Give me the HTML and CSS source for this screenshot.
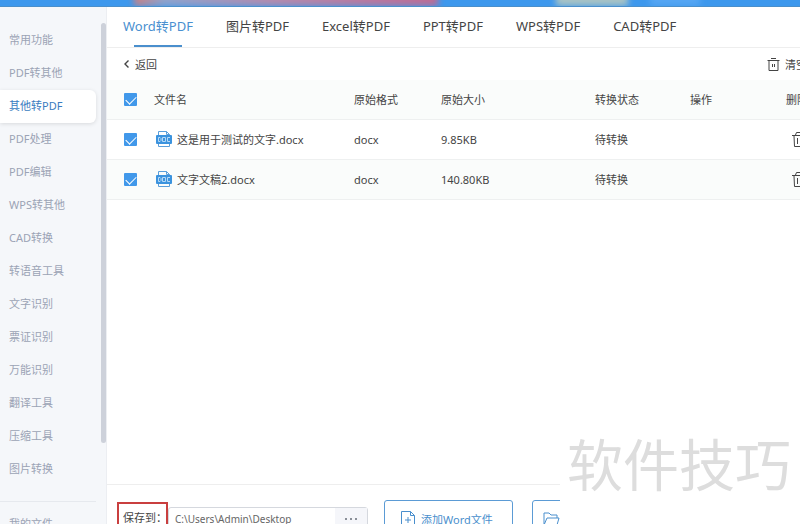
FILE: index.html
```html
<!DOCTYPE html>
<html lang="zh-CN">
<head>
    <meta charset="UTF-8">
    <meta name="viewport" content="width=device-width, initial-scale=1.0">
    <title>Word转PDF</title>
    <link rel="stylesheet" href="styles.css">
</head>
<body>
    <svg class="symbols" aria-hidden="true">
        <symbol id="icon-doc" viewBox="0 0 18 18">
            <path d="M3.500 7V1.500h8l3 3V7M3.500 13v3.500h11V13M11.500 1.500v3h3" fill="none" stroke="#5a9fdb"/>
            <rect x="1" y="5" width="16" height="9" rx="1" fill="#3b93de"/>
            <path d="M3.500 7.500v4h1.500l1-1v-2l-1-1zM7.500 7.500h3v4h-3zM15 7.500h-2.500v4H15" fill="none" stroke="#b5d8f6"/>
        </symbol>
        <symbol id="icon-clear" viewBox="0 0 13 13">
            <path d="M.5 2.500h12M4 .5h5M2 3v9.500h9V3M5.500 6v3M7.500 6v3" fill="none" stroke="currentColor"/>
        </symbol>
        <symbol id="icon-trash" viewBox="0 0 14 17">
            <path d="M0 4.500h14M3.500 4l1-2.500h5l1 2.500M2 5l.5 10.500h9L12 5M5.500 7v6M8.500 7v6" fill="none" stroke="currentColor"/>
        </symbol>
    </svg>

    <header class="titlebar">
        <span class="blur blur-red"></span>
        <span class="blur blur-tan"></span>
        <span class="blur blur-light"></span>
    </header>

    <div class="app">
        <aside class="sidebar">
            <nav class="menu">
                <a href="#">常用功能</a>
                <a href="#">PDF转其他</a>
                <a href="#" class="active">其他转PDF</a>
                <a href="#">PDF处理</a>
                <a href="#">PDF编辑</a>
                <a href="#">WPS转其他</a>
                <a href="#">CAD转换</a>
                <a href="#">转语音工具</a>
                <a href="#">文字识别</a>
                <a href="#">票证识别</a>
                <a href="#">万能识别</a>
                <a href="#">翻译工具</a>
                <a href="#">压缩工具</a>
                <a href="#">图片转换</a>
                <a href="#" class="my-files">我的文件</a>
            </nav>
            <div class="scroll-thumb"></div>
        </aside>

        <main class="main">
            <nav class="tabs">
                <a href="#" class="active">Word转PDF</a>
                <a href="#">图片转PDF</a>
                <a href="#">Excel转PDF</a>
                <a href="#">PPT转PDF</a>
                <a href="#">WPS转PDF</a>
                <a href="#">CAD转PDF</a>
            </nav>

            <div class="toolbar">
                <button type="button" class="back">
                    <svg width="7" height="8" viewBox="0 0 7 8"><path d="M5.500 .5L2 4l3.500 3.500" fill="none" stroke="currentColor" stroke-width="1.4"/></svg>
                    返回
                </button>
                <button type="button" class="clear">
                    <svg width="13" height="13"><use href="#icon-clear"/></svg>
                    清空
                </button>
            </div>

            <table class="files">
                <thead>
                    <tr>
                        <th class="col-check"><input type="checkbox" aria-label="全选" checked></th>
                        <th class="col-name">文件名</th>
                        <th class="col-format">原始格式</th>
                        <th class="col-size">原始大小</th>
                        <th class="col-status">转换状态</th>
                        <th class="col-action">操作</th>
                        <th class="col-delete">删除</th>
                    </tr>
                </thead>
                <tbody>
                    <tr>
                        <td><input type="checkbox" id="file1" checked></td>
                        <td><label class="file" for="file1"><svg width="18" height="18"><use href="#icon-doc"/></svg>这是用于测试的文字.docx</label></td>
                        <td>docx</td>
                        <td>9.85KB</td>
                        <td>待转换</td>
                        <td></td>
                        <td><button type="button" class="delete" aria-label="删除"><svg width="14" height="17"><use href="#icon-trash"/></svg></button></td>
                    </tr>
                    <tr>
                        <td><input type="checkbox" id="file2" checked></td>
                        <td><label class="file" for="file2"><svg width="18" height="18"><use href="#icon-doc"/></svg>文字文稿2.docx</label></td>
                        <td>docx</td>
                        <td>140.80KB</td>
                        <td>待转换</td>
                        <td></td>
                        <td><button type="button" class="delete" aria-label="删除"><svg width="14" height="17"><use href="#icon-trash"/></svg></button></td>
                    </tr>
                </tbody>
            </table>

            <footer class="bottom">
                <label class="save-label" for="savePath">保存到：</label>
                <div class="path">
                    <input type="text" id="savePath" value="C:\Users\Admin\Desktop">
                    <button type="button" class="browse" aria-label="浏览">
                        <svg width="12" height="2" viewBox="0 0 12 2"><path d="M0 0h2v2H0zM5 0h2v2H5zM10 0h2v2h-2z" fill="#8a8f98"/></svg>
                    </button>
                </div>
                <button type="button" class="add">
                    <svg width="14" height="16" viewBox="0 0 14 16"><path d="M.5 .5h9l4 4v11H.5zM9.500 .5v4h4M7 6v6M4 9h6" fill="none" stroke="currentColor"/></svg>
                    添加Word文件
                </button>
                <button type="button" class="add">
                    <svg width="17" height="14" viewBox="0 0 17 14"><path d="M1 13V1h5l2 2h6v3M1 13l3-7h12l-2 7z" fill="none" stroke="currentColor"/></svg>
                    添加文件夹
                </button>
            </footer>
        </main>
    </div>

    <div class="watermark">软件技巧</div>
</body>
</html>
```

FILE: styles.css
```css
* {
    box-sizing: border-box;
}
body {
    margin: 0;
    height: 100vh;
    overflow: hidden;
    display: flex;
    flex-direction: column;
    font-family: "Noto Sans", "Noto Sans CJK SC", sans-serif;
    font-size: 11px;
    color: #444;
    background-color: #fff;
}
a {
    color: inherit;
    text-decoration: none;
}
button {
    padding: 0;
    border: none;
    background: none;
    font: inherit;
    color: inherit;
    cursor: pointer;
}
svg {
    flex: none;
}
.symbols {
    position: absolute;
    width: 0;
    height: 0;
}

/* title bar */
.titlebar {
    position: relative;
    flex: none;
    height: 7px;
    overflow: hidden;
    background-color: #3d98ed;
    border-bottom: 1px solid #4a8fcb;
}
.blur {
    position: absolute;
    top: -8px;
    height: 14px;
    filter: blur(3px);
}
.blur-red {
    left: 134px;
    width: 304px;
    background: linear-gradient(to right, #cc7f80, #8fa3cc 10%, #b58bac 45%, #c06a92);
}
.blur-tan {
    left: 556px;
    width: 72px;
    background-color: #a9c3c4;
}
.blur-light {
    left: 650px;
    width: 50px;
    background-color: #55a6f3;
}

.app {
    flex: 1;
    min-height: 0;
    display: flex;
}

/* sidebar */
.sidebar {
    flex: none;
    width: 107px;
    display: flex;
    overflow: hidden;
    background-color: #f5f7fa;
    border-right: 1px solid #eceef2;
}
.menu {
    flex: 1;
    padding: 17px 5px 0 0;
    color: #9ba3b5;
}
.menu a {
    display: block;
    height: 33px;
    padding-left: 9px;
    line-height: 32px;
    white-space: nowrap;
}
.menu a.active {
    color: #3a7cc0;
    background-color: #fff;
    border-radius: 0 6px 6px 0;
    box-shadow: 0 1px 4px rgba(0, 0, 0, 0.12);
}
.menu a.my-files {
    margin-top: 15px;
    height: 50px;
    line-height: 44px;
    border-top: 1px solid #e6e9ee;
}
.scroll-thumb {
    width: 5px;
    height: 420px;
    margin-top: 16px;
    border-radius: 3px;
    background-color: #cdd1da;
}

/* main */
.main {
    flex: 1;
    min-width: 0;
    display: flex;
    flex-direction: column;
    overflow: hidden;
}
.tabs {
    flex: none;
    display: flex;
    gap: 33px;
    height: 41px;
    padding-left: 16px;
    border-bottom: 1px solid #eee;
    font-size: 13px;
    line-height: 38px;
    white-space: nowrap;
}
.tabs a.active {
    display: flex;
    flex-direction: column;
    align-items: center;
    color: #4a90d0;
}
.tabs a.active::after {
    content: "";
    width: 48px;
    height: 2px;
    background-color: #4a8fcd;
}
.toolbar {
    flex: none;
    display: flex;
    justify-content: space-between;
    min-width: 716px;
    height: 32px;
    padding: 0 16px;
}
.toolbar button {
    display: flex;
    align-items: center;
    gap: 5px;
}

.files {
    flex: none;
    width: 100%;
    min-width: 740px;
    table-layout: fixed;
    border-collapse: separate;
    border-spacing: 0;
}
.files th,
.files td {
    height: 40px;
    padding: 0 0 1px;
    border-bottom: 1px solid #eef0f0;
    font-weight: normal;
    text-align: left;
    white-space: nowrap;
}
.files th,
.files tr:nth-child(even) td {
    background-color: #fafcfb;
}
.files th:first-child,
.files td:first-child {
    padding-left: 17px;
}
.col-check {
    width: 47px;
}
.col-name {
    width: 200px;
}
.col-format {
    width: 87px;
}
.col-size {
    width: 154px;
}
.col-status {
    width: 95px;
}
.col-action {
    width: 96px;
}
.files input {
    appearance: none;
    display: block;
    width: 13px;
    height: 13px;
    margin: 0;
    border-radius: 1px;
    background-color: #4198ea;
}
.files input:checked::after {
    content: "";
    display: block;
    width: 9px;
    height: 5px;
    margin: 3px 0 0 2px;
    border-left: 1px solid #fff;
    border-bottom: 1px solid #fff;
    transform: rotate(-45deg);
}
.file {
    display: flex;
    align-items: center;
    gap: 4px;
    padding-left: 1px;
}
.delete {
    display: block;
    padding-left: 6px;
}
.delete svg {
    display: block;
}

/* bottom bar */
.bottom {
    flex: none;
    display: flex;
    align-items: flex-start;
    height: 40px;
    margin-top: auto;
    padding: 15px 0 0 10px;
    border-top: 1px solid #eee;
    white-space: nowrap;
}
.save-label {
    flex: none;
    width: 51px;
    height: 34px;
    margin-top: 2px;
    padding-left: 4px;
    border: 2px solid #c93f3f;
    line-height: 28px;
}
.path {
    flex: none;
    display: flex;
    width: 200px;
    height: 24px;
    margin: 7px 16px 0 0;
    border: 1px solid #d5d8de;
    border-radius: 3px;
}
.path input {
    flex: 1;
    min-width: 0;
    padding: 0 6px;
    border: none;
    background: none;
    font: inherit;
    font-size: 10px;
    color: #666;
}
.browse {
    display: flex;
    align-items: center;
    justify-content: center;
    width: 32px;
    background-color: #f5f6fa;
}
.add {
    flex: none;
    display: flex;
    align-items: center;
    gap: 6px;
    min-width: 129px;
    height: 37px;
    margin-right: 19px;
    padding: 0 10px 0 16px;
    border: 1px solid #5b9bd5;
    border-radius: 3px;
    color: #4a8fcd;
}
.add + .add {
    padding-left: 10px;
}

.watermark {
    position: absolute;
    right: 0;
    bottom: 0;
    width: 240px;
    height: 96px;
    padding-left: 7px;
    background-color: #fff;
    font-size: 56px;
    line-height: 72px;
    color: #ddd;
    white-space: nowrap;
}
```
